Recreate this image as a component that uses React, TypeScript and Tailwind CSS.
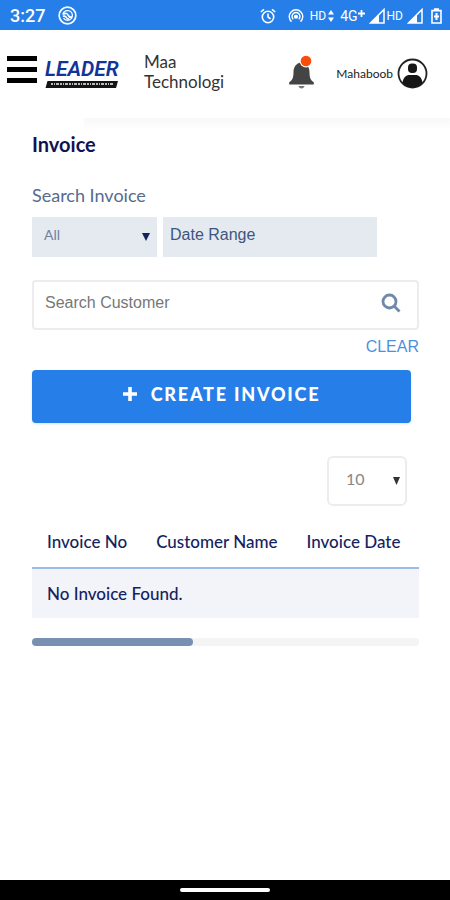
import React, { useState } from "react";

const columns = ["Invoice No", "Customer Name", "Invoice Date"];

function StatusBar() {
	return (
		<div className="flex h-[30px] items-center justify-between bg-[#267fe8] pt-px pr-2 pl-[10px] font-['Roboto',sans-serif] text-white">
			<div className="flex items-center gap-[13px]">
				<span className="text-lg leading-5 font-medium">3:27</span>
				<svg className="size-[19px]" viewBox="0 0 18 18" fill="none" stroke="currentColor">
					<circle cx="9" cy="9" r="7.9" strokeWidth="1.6" />
					<path d="M4.6 8.2C5 5.7 7 4.2 9.3 4.3c2.6.1 4.4 2.2 4.3 4.8-.1 2.4-2 4.4-4.5 4.4-1.7 0-3-.7-3.9-2" strokeWidth="1.2" />
					<path d="M5 7.8c1.8-1.3 4-.9 4.6.8.5 1.3 1.5 2.2 3.6 2M4.6 9.8c1.8-.8 2.800 0 3.400 1.200.5.9 1.400 1.400 2.600 1.300" strokeWidth="1.6" />
				</svg>
			</div>
			<div className="flex items-center">
				<svg className="mr-3 size-4" viewBox="0 0 16 16" fill="none" stroke="currentColor" strokeWidth="1.6">
					<circle cx="8" cy="9" r="5.7" />
					<path d="M8 5.5V9l2.6 1.8M.8 4 4 1.3M15.2 4 12 1.3" />
				</svg>
				<svg className="mr-[6px] size-4" viewBox="0 0 17 17" fill="none" stroke="currentColor" strokeWidth="1.5">
					<path d="M3.7 14.5a7.2 7.2 0 1 1 9.6 0M5.6 12a4.2 4.2 0 1 1 5.8 0" />
					<circle cx="8.5" cy="9.3" r="1.5" fill="currentColor" />
				</svg>
				<span className="text-xs leading-4">HD</span>
				<svg className="mr-[6px] ml-[2px] h-3 w-[6px]" viewBox="0 0 6 12" fill="currentColor">
					<path d="M3 0 6 4.5H0zM3 12 0 7.5h6z" />
				</svg>
				<span className="text-sm leading-4">4G</span>
				<svg className="mr-1 mb-1 size-[7px]" viewBox="0 0 7 7" stroke="currentColor" strokeWidth="1.8">
					<path d="M3.5 0v7M0 3.5h7" />
				</svg>
				<Signal />
				<span className="mr-1 ml-[2px] text-xs leading-4">HD</span>
				<Signal />
				<svg className="ml-2 h-4 w-[11px]" viewBox="0 0 11 16" fill="none" stroke="currentColor" strokeWidth="1.6">
					<path d="M3.8 2.3V1h3.4v1.3M1 2.6h9v12.4H1z" />
					<path d="M5.5 5v7M3 8.5h5" strokeWidth="2" />
				</svg>
			</div>
		</div>
	);
}

function Signal() {
	return (
		<svg className="size-4" viewBox="0 0 16 16">
			<path d="M15 1.5V15H1.5z" fill="none" stroke="currentColor" strokeWidth="1.5" />
			<path d="M10 6.5V15H1.5z" fill="currentColor" />
		</svg>
	);
}

function Logo() {
	return (
		<span className="flex w-[75px] flex-col">
			<span className="font-['Roboto',sans-serif] text-[21px] leading-6 font-semibold whitespace-nowrap text-[#12349a] italic">
				LEADER
			</span>
			<svg className="h-[7px] w-[74px]" viewBox="0 0 74 7" aria-hidden="true">
				<path d="M2.5 0H73l-2 7H.5z" fill="#151515" />
				<path d="M6 3h62" stroke="#bbb" strokeWidth="1.8" strokeDasharray="2 1 1 1 3 1" />
			</svg>
		</span>
	);
}

function Header() {
	return (
		<header className="flex h-[88px] items-start pt-[25px] pr-[22px] pl-[7px] font-['Lato',sans-serif]">
			<button aria-label="Menu" className="mt-[1px] flex w-[30px] shrink-0 flex-col gap-[6px]">
				<span className="h-[5px] w-full bg-black" />
				<span className="h-[5px] w-full bg-black" />
				<span className="h-[5px] w-full bg-black" />
			</button>
			<a href="#" className="mt-[2px] ml-2">
				<Logo />
			</a>
			<div className="-mt-[3px] ml-6 text-[17px] leading-5 text-[#333]">
				Maa
				<br />
				Technologi
			</div>
			<button aria-label="Notifications" className="ml-auto">
				<svg className="h-9 w-7" viewBox="0 0 28 36">
					<path d="M12.500 7.500c-4.500 1-7 4.800-7 9.500 0 6-1.300 8.500-4.300 10.300v2.200h24.600v-2.200c-3-1.800-4.300-4.300-4.300-10.300 0-4.700-2.500-8.500-7-9.500z" fill="#444" />
					<path d="M10.500 31h6c-.4 3.200-5.600 3.200-6 0z" fill="#777" />
					<circle cx="18" cy="6" r="6.5" fill="#fff" />
					<circle cx="18" cy="6" r="5.3" fill="#fb4c0a" />
				</svg>
			</button>
			<button className="mt-[3px] ml-5 flex items-center gap-1 text-xs text-[#222]">
				<span>Mahaboob</span>
				<svg className="size-[31px]" viewBox="0 0 31 31">
					<circle cx="15.5" cy="15.5" r="14" fill="#fff" stroke="#222" strokeWidth="1.8" />
					<path d="M5.5 25c.5-5.500 3.800-8 7-8h6c3.200 0 6.500 2.500 7 8-5.600 6-14.400 6-20 0z" fill="#161616" />
					<rect x="11" y="5.5" width="9" height="9.5" rx="4" fill="#161616" />
				</svg>
			</button>
		</header>
	);
}

export default function App() {
	const [search, setSearch] = useState("");
	const [range, setRange] = useState("");

	return (
		<div className="flex min-h-screen flex-col bg-white font-['Lato',sans-serif] text-[#14235f]">
			<StatusBar />
			<Header />
			<div className="ml-[84px] h-3 bg-linear-to-b from-[#f8f8f8] to-white" />
			<main className="flex flex-1 flex-col pr-[31px] pl-8">
				<h1 className="text-xl leading-7 font-bold text-[#111350]">Invoice</h1>
				<label htmlFor="type" className="mt-[23px] text-lg leading-7 text-[#566b8d]">
					Search Invoice
				</label>
				<div className="mt-2 grid grid-cols-[125fr_214fr] gap-[6px] pr-[42px]">
					<div className="relative">
						<select id="type" className="h-10 w-full appearance-none bg-[#e5e9f0] pb-1 pl-3 text-sm text-[#71819f]">
							<option>All</option>
						</select>
						<svg className="pointer-events-none absolute top-4 right-[7px] h-2 w-2" viewBox="0 0 8 8">
							<path d="M0 0h8L4 8z" fill="#132458" />
						</svg>
					</div>
					<input
						aria-label="Date Range"
						placeholder="Date Range"
						value={range}
						onChange={(e) => setRange(e.target.value)}
						className="h-10 w-full min-w-0 bg-[#e5e9f0] pb-1 pl-[7px] font-['Liberation_Sans',sans-serif] text-base placeholder:text-[#3d5680]"
					/>
				</div>
				<div className="mt-[23px] flex h-[50px] items-center rounded-sm border-2 border-[#ececec] pr-4 pb-1 pl-[11px] font-['Liberation_Sans',sans-serif]">
					<input
						aria-label="Search Customer"
						placeholder="Search Customer"
						value={search}
						onChange={(e) => setSearch(e.target.value)}
						className="h-full min-w-0 flex-1 text-base outline-none placeholder:text-[#777]"
					/>
					<button aria-label="Search">
						<svg className="size-5" viewBox="0 0 20 20" fill="none" stroke="#7188aa" strokeWidth="2.8">
							<circle cx="8.5" cy="8.5" r="6.5" />
							<path d="m13.3 13.3 5.2 5.2" />
						</svg>
					</button>
				</div>
				<button
					onClick={() => setSearch("")}
					className="mt-[7px] self-end font-['Liberation_Sans',sans-serif] text-base leading-5 text-[#4d91dc]"
				>
					CLEAR
				</button>
				<button className="mt-[13px] mr-2 flex h-[53px] items-center justify-center gap-[14px] rounded-sm bg-[#267fe8] pb-[5px] text-lg font-black tracking-widest text-white shadow-sm">
					<svg className="size-[14px]" viewBox="0 0 14 14" stroke="currentColor" strokeWidth="3.6">
						<path d="M7 0v14M0 7h14" />
					</svg>
					CREATE INVOICE
				</button>
				<div className="relative mt-[33px] mr-3 w-20 self-end">
					<select
						aria-label="Rows per page"
						className="h-[50px] w-full appearance-none rounded-md border-2 border-[#ececec] bg-white pb-1 pl-[17px] text-base text-[#888]"
					>
						<option>10</option>
						<option>25</option>
						<option>50</option>
					</select>
					<svg className="pointer-events-none absolute top-[21px] right-[7px] h-2 w-[7px]" viewBox="0 0 7 8">
						<path d="M0 0h7L3.5 8z" fill="#333" />
					</svg>
				</div>
				<div className="mt-[11px] overflow-hidden">
					<table className="w-full border-collapse text-left text-[17px] leading-6 whitespace-nowrap">
						<thead>
							<tr className="border-b-2 border-[#9cbce8]">
								{columns.map((name) => (
									<th key={name} className="h-[51px] w-px pr-[14px] pl-[15px] font-medium last:w-auto">
										{name}
									</th>
								))}
							</tr>
						</thead>
						<tbody>
							<tr className="bg-[#f2f4f9]">
								<td colSpan={3} className="h-[50px] px-[15px] font-medium">
									No Invoice Found.
								</td>
							</tr>
						</tbody>
					</table>
				</div>
				<div className="mt-5 h-2 rounded-full bg-[#f4f4f4]">
					<div className="h-full w-5/12 rounded-full bg-[#7890b1]" />
				</div>
			</main>
			<footer className="flex h-5 items-center justify-center bg-black">
				<div className="h-1 w-1/5 rounded-full bg-white" />
			</footer>
		</div>
	);
}
